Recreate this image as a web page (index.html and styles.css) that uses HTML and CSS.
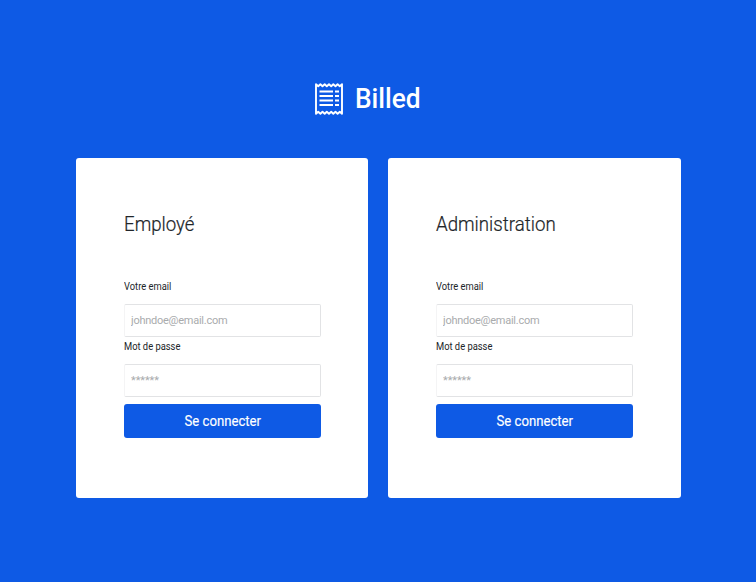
FILE: index.html
```html
<!DOCTYPE html>
<html lang="fr">
<head>
<meta charset="utf-8">
<title>Billed</title>
<link rel="stylesheet" href="styles.css">
</head>
<body>
<header class="brand">
  <svg class="logo" viewBox="0 0 30 34" fill="none" stroke="currentColor">
    <path stroke-width="1.9" stroke-linejoin="round" d="M2 2.2l2.2 2 2.2-2 2.1 2 2.2-2 2.1 2 2.2-2 2.2 2 2.1-2 2.2 2 2.1-2 2.2 2 2.2-2V31.800l-2.200-2-2.200 2-2.100-2-2.200 2-2.100-2-2.200 2-2.200-2-2.100 2-2.200-2-2.100 2-2.200-2-2.200 2z"/>
    <path stroke-width="2.2" d="M5.500 9.500H19M5.500 14H19M5.500 18.500H19M5.500 23H19M21 9.500H25M21 14H25M21 18.500H25M21 23H25"/>
  </svg>
  <h1 class="name">Billed</h1>
</header>
<main class="cards">
  <form class="card">
    <h2 class="title">Employé</h2>
    <label class="label" for="employee-email">Votre email</label>
    <input class="field" id="employee-email" type="email" placeholder="johndoe@email.com">
    <label class="label" for="employee-password">Mot de passe</label>
    <input class="field" id="employee-password" type="password" placeholder="******">
    <button class="submit" type="button"><span class="caption">Se connecter</span></button>
  </form>
  <form class="card">
    <h2 class="title">Administration</h2>
    <label class="label" for="admin-email">Votre email</label>
    <input class="field" id="admin-email" type="email" placeholder="johndoe@email.com">
    <label class="label" for="admin-password">Mot de passe</label>
    <input class="field" id="admin-password" type="password" placeholder="******">
    <button class="submit" type="button"><span class="caption">Se connecter</span></button>
  </form>
</main>
</body>
</html>
```
FILE: styles.css
```css
* { box-sizing: border-box; }
body {
  margin: 0;
  min-height: 582px;
  background: #0e5ae5;
  font-family: Roboto, sans-serif;
  color: #212529;
}
.brand {
  display: flex;
  align-items: center;
  gap: 11px;
  height: 158px;
  padding: 40px 0 0 314px;
  color: #fff;
}
.logo { width: 30px; height: 34px; }
.name {
  margin: 0;
  font-size: 28px;
  line-height: 34px;
  font-weight: 500;
  transform: scaleX(0.94);
  transform-origin: left;
}
.cards {
  display: grid;
  grid-template-columns: 292px 293px;
  gap: 20px;
  padding-left: 76px;
}
.card {
  display: flex;
  flex-direction: column;
  height: 340px;
  padding: 52px 47px 0 48px;
  background: #fff;
  border-radius: 3px;
}
.title {
  margin: 0 0 41px;
  font-size: 19.5px;
  line-height: 30px;
  font-weight: 300;
  -webkit-text-stroke: 0.2px;
  transform: scaleX(0.958);
  transform-origin: left;
}
.label {
  height: 12px;
  margin-bottom: 11px;
  font-size: 10px;
  line-height: 12px;
  transform: scaleX(0.935);
  transform-origin: left;
}
.field {
  height: 33px;
  margin: 0 0 4px;
  padding: 0 6px;
  border: 1px solid #e2e3e5;
  border-left-color: #f4f4f5;
  border-radius: 2px;
  background: #fff;
  font: 11px Roboto, sans-serif;
  letter-spacing: -0.25px;
}
.field[type="password"] { letter-spacing: -0.1px; }
.field::placeholder { color: #a9abad; opacity: 1; }
.submit {
  height: 34px;
  margin-top: 3px;
  padding: 0;
  border: 0;
  border-radius: 3px;
  background: #0e5ae5;
  color: #fff;
  font: 14px Roboto, sans-serif;
}
.caption { display: inline-block; transform: scaleX(0.94); -webkit-text-stroke: 0.15px; }
.card + .card { padding-right: 48px; }
```
